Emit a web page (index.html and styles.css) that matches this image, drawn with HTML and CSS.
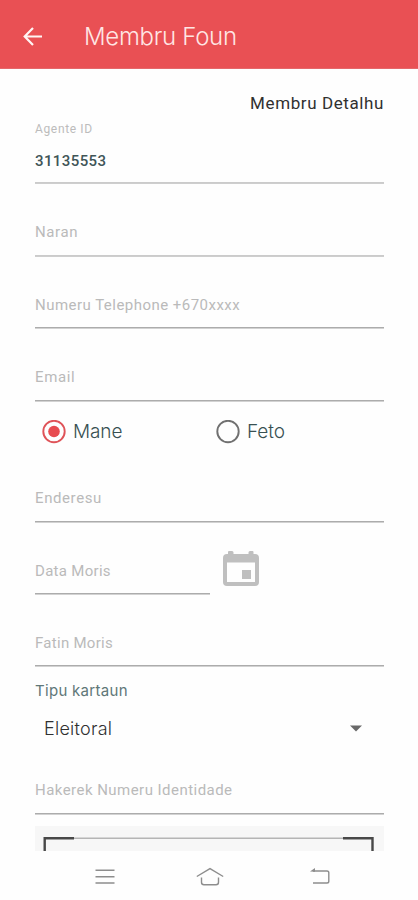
FILE: index.html
```html
<!DOCTYPE html>
<html lang="tet">
<head>
<meta charset="utf-8">
<title>Membru Foun</title>
<link rel="stylesheet" href="styles.css">
</head>
<body>
<header class="bar">
  <svg class="back" width="20" height="20" viewBox="0 0 20 20"><path d="M19 9.500H2M10 1L1.700 9.500l8.300 8.500"/></svg>
  <h1 class="title"><span>Membru Foun</span></h1>
</header>
<main class="form">
  <h2 class="section"><span>Membru Detalhu</span></h2>
  <div class="agent-label"><span>Agente ID</span></div>
  <div class="field agent thick"><span class="value">31135553</span></div>
  <div class="field thick naran"><span>Naran</span></div>
  <div class="field"><span class="phone">Numeru Telephone +670xxxx</span></div>
  <div class="field email"><span>Email</span></div>
  <div class="radios">
    <div class="radio"><svg class="on" width="24" height="24" viewBox="0 0 24 24"><circle class="ring" cx="12" cy="11.500" r="10.700"/><circle class="dot" cx="12" cy="11.500" r="5.800"/></svg><span>Mane</span></div>
    <div class="radio"><svg width="24" height="24" viewBox="0 0 24 24"><circle class="ring" cx="12" cy="11.500" r="10.700"/></svg><span>Feto</span></div>
  </div>
  <div class="field address"><span>Enderesu</span></div>
  <div class="date-row">
    <div class="field date"><span class="moris">Data Moris</span></div>
    <svg class="calendar" width="36" height="37" viewBox="0 0 36 37"><path fill-rule="evenodd" d="M5 2Q5 1 6 1h3q1.500 0 1.500 1.500V4h15V2.500Q25.500 1 27 1h2.500q1 0 1 1v2H32q4 0 4 4v24q0 4-4 4H4q-4 0-4-4V8q0-4 4-4h1zM4 12.500V32h28V12.500zM19 20h9v9h-9z"/></svg>
  </div>
  <div class="field"><span class="fatin">Fatin Moris</span></div>
  <div class="card-label"><span>Tipu kartaun</span></div>
  <div class="select"><span>Eleitoral</span><svg width="12" height="7" viewBox="0 0 12 7"><path d="M0 .5h12L6 6.500z"/></svg></div>
  <div class="field identity"><span>Hakerek Numeru Identidade</span></div>
  <div class="scan">
    <svg width="332" height="14" viewBox="0 0 332 14"><path class="thin" d="M31 1.300h269"/><path class="corner" d="M1.700 14V1.300H31M300 1.300h29.500V14"/></svg>
  </div>
</main>
<nav class="nav">
  <svg width="20" height="20" viewBox="0 0 20 20"><path d="M.5 3.200h19M.5 9.800h19M.5 16h19"/></svg>
  <svg width="28" height="20" viewBox="0 0 28 20"><path d="M.8 9.500L14 1.600l13.200 7.900M5.500 10.500v4.800q0 2.500 2.500 2.500h12q2.500 0 2.500-2.500v-4.800"/></svg>
  <svg class="return" width="20" height="20" viewBox="0 0 20 20"><path d="M3 4h14q1.800 0 1.800 1.800v8.400q0 1.800-1.800 1.800H3"/><path class="tip" d="M0 4.600L5 1v3.700z"/></svg>
</nav>
</body>
</html>
```
FILE: styles.css
```css
* { box-sizing: border-box; }
body {
  margin: 0;
  height: 900px;
  overflow: hidden;
  background: #fefefe;
  font-family: Roboto, "Liberation Sans", sans-serif;
  display: flex;
  flex-direction: column;
}
svg { display: block; flex: none; }
span { white-space: nowrap; }
.bar {
  height: 69px;
  flex: none;
  background: #e95054;
  border-bottom: 1px solid #e5676a;
  display: flex;
  align-items: center;
  padding: 5px 0 0 23px;
}
.back { fill: none; stroke: #fff5f4; stroke-width: 2.200; }
.title {
  margin: 1px 0 0 41px;
  font: 300 24px/30px Inter, sans-serif;
  letter-spacing: -.3px;
  color: #ffe6e4;
}
.form { height: 782px; flex: none; padding: 24px 34px 0 35px; }
.section {
  margin: 0;
  font-size: 17px;
  font-weight: 400;
  line-height: 21px;
  letter-spacing: .600px;
  text-align: right;
  color: #303030;
}
.agent-label { margin-top: 7px; font-size: 12px; line-height: 16px; letter-spacing: .65px; color: #bcbcbc; }
.field {
  height: 72px;
  display: flex;
  align-items: flex-end;
  padding-bottom: 12px;
  border-bottom: 1px solid #acacac;
  box-shadow: 0 1px #d2d2d2;
  font-size: 15px;
  line-height: 20px;
  letter-spacing: .6px;
  color: #bababa;
}
.thick { border-bottom-color: #cbcbcb; box-shadow: 0 1px #cecece; }
.agent { height: 46px; padding-bottom: 11px; }
.naran { height: 73px; padding-bottom: 13px; }
.phone { letter-spacing: .47px; }
.moris { letter-spacing: .3px; }
.fatin { letter-spacing: .28px; }
.value { color: #405557; font-weight: 500; letter-spacing: .4px; }
.email { height: 73px; padding-bottom: 13px; }
.radios { height: 60px; display: flex; padding: 19px 0 0 7px; }
.radio { flex: none; width: 174px; height: 24px; display: flex; align-items: center; gap: 7px; font: 300 19px/24px Inter, sans-serif; letter-spacing: -.1px; color: #385052; }
.ring { fill: none; stroke: #707070; stroke-width: 1.900; }
.on .ring { stroke: #df5358; }
.dot { fill: #e74b4f; }
.address { height: 61px; padding-bottom: 13px; }
.date-row { height: 72px; display: flex; }
.date { width: 175px; }
.calendar { margin: 28px 0 0 13px; fill: #bfbfbf; }
.card-label { margin-top: 15px; font: 400 15px/20px Inter, sans-serif; letter-spacing: .3px; color: #607778; }
.select { height: 54px; padding: 1px 22px 0 9px; display: flex; align-items: center; justify-content: space-between; font: 300 18px/24px Inter, sans-serif; letter-spacing: .25px; color: #303030; }
.select svg { fill: #696969; }
.identity { height: 59px; padding-bottom: 13px; letter-spacing: .46px; }
.scan { height: 25px; margin-top: 12px; background: #f7f7f7; padding: 11px 0 0 8px; }
.thin { fill: none; stroke: #b5b5b5; stroke-width: 1.500; }
.corner { fill: none; stroke: #484848; stroke-width: 2.400; }
.nav { height: 49px; flex: none; padding: 2px 88px 0 95px; display: flex; align-items: center; gap: 81px; fill: none; stroke: #8d8d8d; stroke-width: 1.400; }
.return { margin-left: 5px; }
.tip { fill: #8d8d8d; stroke: none; }
```
